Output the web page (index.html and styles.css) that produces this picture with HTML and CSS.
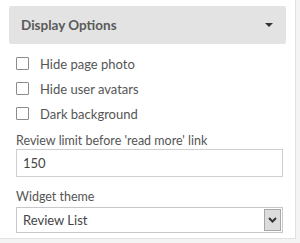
FILE: index.html
```html
<!DOCTYPE html>
<html lang="en">
<head>
    <meta charset="UTF-8">
    <meta name="viewport" content="width=device-width, initial-scale=1.0">
    <title>Display Options</title>
    <link rel="stylesheet" href="styles.css">
</head>
<body>
    <div class="panel">
        <div class="panel-header">
            <span>Display Options</span>
            <span class="caret"></span>
        </div>
        <div class="panel-body">
            <label class="check-row"><input type="checkbox"> Hide page photo</label>
            <label class="check-row"><input type="checkbox"> Hide user avatars</label>
            <label class="check-row"><input type="checkbox"> Dark background</label>

            <div class="field-label">Review limit before 'read more' link</div>
            <div class="text-box">150</div>

            <div class="field-label theme-label">Widget theme</div>
            <div class="select-box">
                <span class="select-value">Review List</span>
                <span class="select-btn">
                    <svg width="9" height="6" viewBox="0 0 9 6"><path d="M1 1 L4.5 4.5 L8 1" fill="none" stroke="#333" stroke-width="2"/></svg>
                </span>
            </div>
        </div>
    </div>
</body>
</html>
```

FILE: styles.css
```css
/* Reset */
body, div, label, input, span {
    margin: 0;
    padding: 0;
    box-sizing: border-box;
}

body {
    font-family: Lato, "Open Sans", sans-serif;
    font-size: 13px;
    color: #555;
    background-color: #f4f4f4;
    width: 300px;
    height: 243px;
    overflow: hidden;
}

/* Panel */
.panel {
    width: 296px;
    height: 239px;
    background: #ffffff;
    border-right: 1px solid #e2e2e2;
    border-bottom: 1px solid #e2e2e2;
    padding: 6px 9px 0 9px;
}

.panel-header {
    height: 38px;
    background-color: #e3e3e3;
    border-radius: 2px;
    display: flex;
    align-items: center;
    justify-content: space-between;
    padding: 0 13px 0 12px;
    font-weight: 700;
    font-size: 13.5px;
    color: #5a5a5a;
}

.caret {
    width: 0;
    height: 0;
    border-left: 4px solid transparent;
    border-right: 4px solid transparent;
    border-top: 4px solid #333;
}

.panel-body {
    padding: 7px 3px 0 7px;
}

/* Checkboxes */
.check-row {
    display: flex;
    align-items: center;
    height: 25px;
    gap: 11px;
    color: #555;
}

.check-row input {
    appearance: none;
    -webkit-appearance: none;
    width: 13px;
    height: 13px;
    border: 1px solid #8c8c8c;
    border-radius: 1px;
    background: #fff;
    flex-shrink: 0;
}

/* Fields */
.field-label {
    margin-top: 7px;
    line-height: 16px;
    font-size: 12.5px;
    color: #555;
}

.theme-label {
    margin-top: 12px;
}

.text-box {
    height: 28px;
    border: 1px solid #cfcfcf;
    padding: 0 6px;
    display: flex;
    align-items: center;
    color: #444;
}

.select-box {
    margin-top: 2px;
    height: 26px;
    border: 1px solid #c8c8c8;
    display: flex;
    align-items: center;
    justify-content: space-between;
    padding: 0 1px 0 6px;
    color: #444;
}

.select-btn {
    width: 17px;
    height: 22px;
    background: #dcdcdc;
    border: 1px solid #a8a8a8;
    display: flex;
    align-items: center;
    justify-content: center;
}
```
